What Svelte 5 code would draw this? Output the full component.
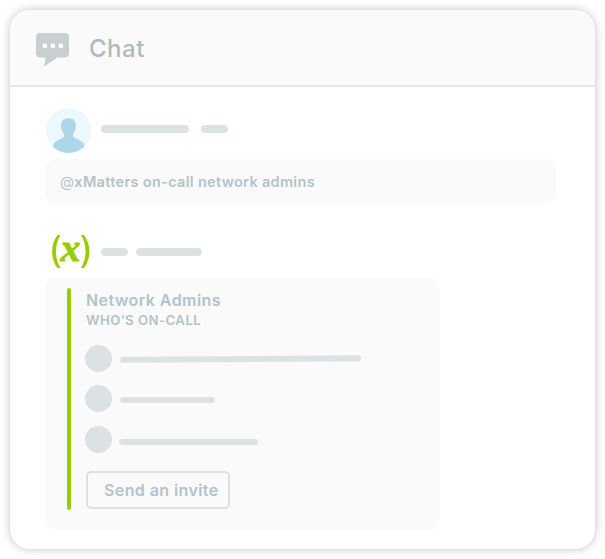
<script>
  const people = [
    { gap: 8, width: 241, drop: 0.5, tilt: -0.42, space: 13 },
    { gap: 8, width: 95, drop: 1.5, tilt: 0, space: 14 },
    { gap: 7, width: 139, drop: 2.5, tilt: 0, space: 0 },
  ];
</script>

<main class="card">
  <header>
    <svg class="bubble" width="33" height="34" viewBox="0 0 33 34">
      <path fill="#c9cfd1" d="M4 0H29Q33 0 33 4V20.500Q33 24.500 29 24.500H21.500L8 33.500L9.500 24.500H4Q0 24.500 0 20.500V4Q0 0 4 0Z" />
      <g fill="#fafafa">
        <rect x="6.500" y="10.500" width="4.500" height="4.500" rx="1" />
        <rect x="14.500" y="10.500" width="4.500" height="4.500" rx="1" />
        <rect x="22.500" y="10.500" width="4.500" height="4.500" rx="1" />
      </g>
    </svg>
    <h1>Chat</h1>
  </header>

  <section class="body">
    <div class="sender user">
      <svg class="avatar" width="45" height="45" viewBox="0 0 45 45">
        <clipPath id="disc"><circle cx="22.500" cy="22.500" r="22.500" /></clipPath>
        <circle cx="22.500" cy="22.500" r="22.500" fill="#ebf9ff" />
        <path clip-path="url(#disc)" fill="#add6e6" d="M22.500 10.300C27.500 10.300 30 13.200 29.900 17.500C29.900 22 28.300 23.500 27 26.200C26.500 29 28 29.800 31.500 31.200C36 33 38.400 35 38.700 39L36 46H9L6.800 39C7.200 35 9.500 33 14 31.200C17.400 29.800 18.500 29 18 26.200C16.700 23.500 15 22 15 17.500C14.900 13.200 17.500 10.300 22.500 10.300Z" />
      </svg>
      <span class="pill" style="width: 88px"></span>
      <span class="pill" style="width: 27px; margin-left: 12px"></span>
    </div>
    <div class="message"><span class="at">@</span>xMatters on-call network admins</div>

    <div class="sender bot">
      <svg class="logo" width="40" height="35" viewBox="0 0 40 35">
        <g fill="#9c0">
          <path d="M6.500 1H9.600C3.400 10.500 3.400 24.500 9.600 34H6.500C-.7 25 -.7 10 6.500 1Z" />
          <path d="M33 1H29.900C36.100 10.500 36.100 24.500 29.900 34H33C40.200 25 40.200 10 33 1Z" />
          <text x="9.500" y="26.500" textLength="20" lengthAdjust="spacingAndGlyphs">x</text>
        </g>
      </svg>
      <span class="pill" style="width: 27px"></span>
      <span class="pill" style="width: 66px; margin-left: 8px"></span>
    </div>
    <div class="panel">
      <div class="accent"></div>
      <div class="details">
        <h2>Network Admins</h2>
        <h3>WHO’S ON-CALL</h3>
        <ul>
          {#each people as p}
            <li style="margin-bottom: {p.space}px">
              <i class="dot"></i>
              <i class="line" style="width: {p.width}px; margin: {p.drop * 2}px 0 0 {p.gap}px; transform: rotate({p.tilt}deg)"></i>
            </li>
          {/each}
        </ul>
        <button>Send an invite</button>
      </div>
    </div>
  </section>
</main>

<style>
  :global(body) { margin: 0; background: #fff; }
  :global(#app) { display: flow-root; }
  .card {
    box-sizing: border-box;
    width: 585px;
    height: 539px;
    margin: 10px;
    border-radius: 20px;
    overflow: hidden;
    background: #fff;
    box-shadow: 0 0 10px rgba(0, 0, 0, 0.24);
    font-family: Inter, "Liberation Sans", sans-serif;
    color: #b5c2c9;
  }
  header {
    box-sizing: border-box;
    height: 77px;
    padding: 23px 0 0 26px;
    display: flex;
    align-items: flex-start;
    background: #fafafa;
    border-bottom: 2px solid #e6e6e6;
  }
  h1, h2, h3, ul { margin: 0; padding: 0; }
  h1 {
    margin: 1px 0 0 20px;
    font-size: 24px;
    line-height: 30px;
    font-weight: 500;
    letter-spacing: 0.5px;
    color: #b1babc;
  }
  .body { padding: 21px 0 0 35px; }
  .sender { display: flex; align-items: center; }
  .user { height: 45px; padding-left: 1px; }
  .avatar { margin-right: 10px; }
  .user .pill { margin-top: -3px; }
  .pill { height: 8px; border-radius: 4px; background: #dce2e4; }
  .message {
    box-sizing: border-box;
    width: 511px;
    height: 45px;
    margin-top: 6px;
    padding: 0 15px;
    border-radius: 10px;
    background: #fafafa;
    font-size: 14.5px;
    line-height: 45px;
    font-weight: 600;
    letter-spacing: 0.32px;
    white-space: nowrap;
  }
  .at { font-weight: 400; }
  .bot { height: 35px; margin-top: 30px; padding-left: 6px; }
  .logo { margin-right: 10px; overflow: visible; }
  .logo text {
    font: italic bold 38px/1 "Liberation Serif", serif;
    stroke: #9c0;
    stroke-width: 0.8px;
  }
  .panel {
    box-sizing: border-box;
    width: 395px;
    height: 252px;
    margin-top: 9px;
    padding: 10px 0 0 21.5px;
    display: flex;
    border-radius: 10px;
    background: #fafafa;
  }
  .accent { width: 4px; height: 222px; border-radius: 2px; background: #9c0; }
  .details { padding-left: 14.5px; }
  h2, h3 { padding-left: 1px; font-weight: 600; white-space: nowrap; }
  h2 { margin-top: 2px; font-size: 16px; line-height: 20px; letter-spacing: 0.45px; }
  h3 { font-size: 13.2px; line-height: 20px; letter-spacing: 0.45px; }
  ul { margin-top: 15px; list-style: none; }
  li { display: flex; align-items: center; height: 27px; }
  .dot { width: 27px; height: 27px; border-radius: 50%; background: #dce2e4; }
  .line { height: 6px; border-radius: 3px; background: #dce2e4; }
  button {
    display: block;
    box-sizing: border-box;
    width: 144px;
    height: 38px;
    margin: 18px 0 0 1px;
    padding: 0 0 0 16px;
    border: 2px solid #dce2e4;
    border-radius: 5px;
    background: transparent;
    color: inherit;
    font: 600 16px/34px Inter, "Liberation Sans", sans-serif;
    letter-spacing: 0.4px;
    text-align: left;
    white-space: nowrap;
  }
</style>
